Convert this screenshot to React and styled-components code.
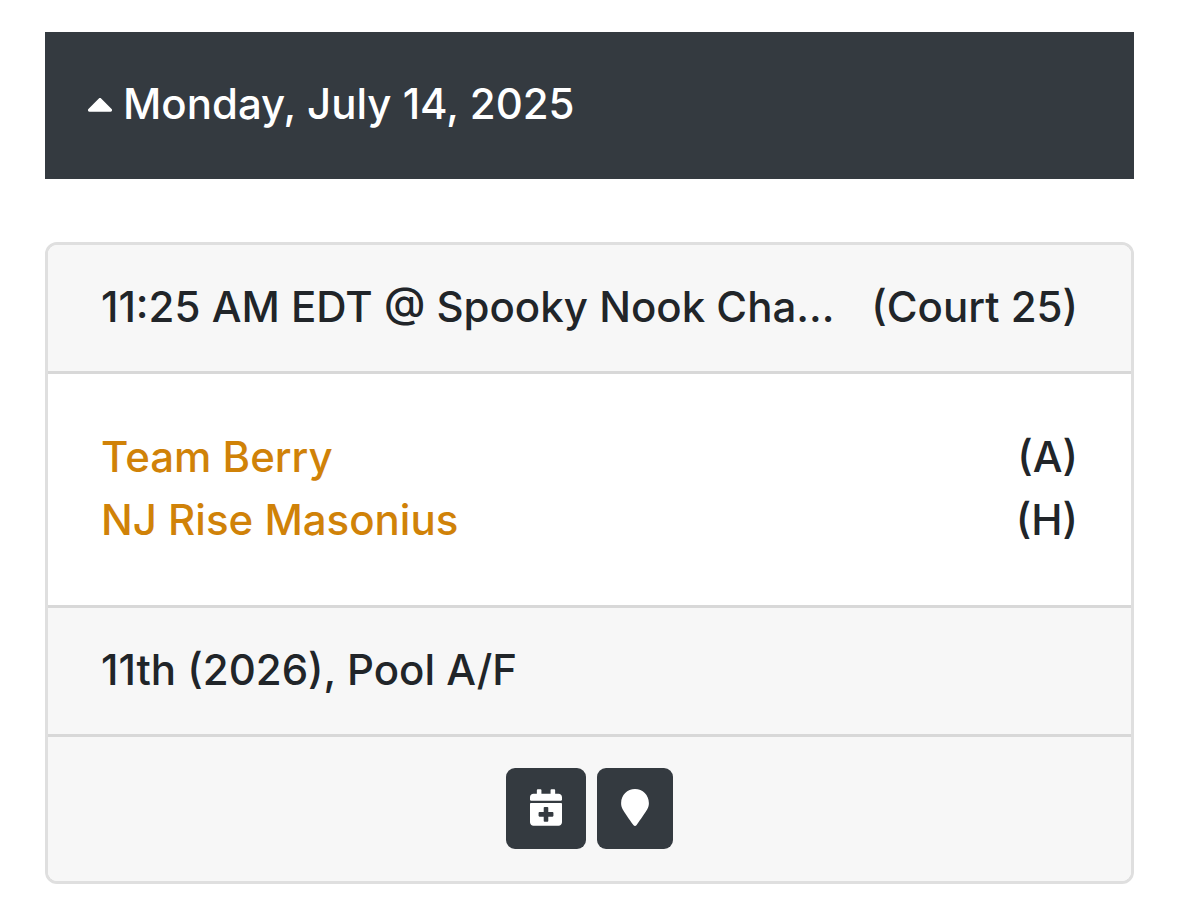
import React from 'react'
import styled, { createGlobalStyle } from 'styled-components'
import { FaCaretUp, FaCalendarPlus, FaMapMarker } from 'react-icons/fa'

const GlobalStyle = createGlobalStyle`
    *, *::before, *::after {
        box-sizing: border-box;
    }
    body {
        margin: 0;
        background-color: #ffffff;
        color: #212529;
        font-family: Inter, "Liberation Sans", sans-serif;
        font-size: 42px;
        font-weight: 500;
        line-height: 63px;
    }
`

const Container = styled.main`
    display: flex;
    flex-direction: column;
    gap: 63px;
    padding: 32px 45px 25px;
`

const DateToggle = styled.button`
    display: flex;
    align-items: center;
    gap: 10px;
    width: 100%;
    padding: 40px 42px 44px;
    border: none;
    background-color: #343a40;
    color: #ffffff;
    font: inherit;
    text-align: left;
    cursor: pointer;

    svg {
        width: 26px;
        height: 42px;
    }
`

const Card = styled.article`
    border: 3px solid #dfdfdf;
    border-radius: 12px;
    background-color: #ffffff;
    overflow: hidden;
`

const CardHeader = styled.header`
    display: flex;
    justify-content: space-between;
    gap: 24px;
    padding: 30px 53px 33px;
    border-bottom: 3px solid #d8d8d8;
    background-color: #f7f7f7;
    white-space: nowrap;
`

const Location = styled.span`
    min-width: 0;
    overflow: hidden;
    text-overflow: ellipsis;
`

const Teams = styled.ul`
    margin: 0;
    padding: 51px 53px 54px;
    list-style: none;
`

const Team = styled.li`
    display: flex;
    justify-content: space-between;
`

const TeamLink = styled.a`
    color: #d08208;
    text-decoration: none;
`

const CardFooter = styled.div`
    padding: 30px 53px 33px;
    border-top: 3px solid #d8d8d8;
    background-color: #f7f7f7;
`

const Actions = styled.div`
    display: flex;
    justify-content: center;
    gap: 11px;
    padding: 31px 53px 32px;
    border-top: 3px solid #d8d8d8;
    background-color: #f7f7f7;
`

const ActionButton = styled.button`
    display: flex;
    align-items: center;
    height: 81px;
    padding: 0 24px 3px;
    border: none;
    border-radius: 9px;
    background-color: #343a40;
    color: #ffffff;
    cursor: pointer;

    svg {
        width: ${props=>props.$iconWidth}px;
        height: 37px;
    }
`

const teams = [
    { name: 'Team Berry', side: '(A)' },
    { name: 'NJ Rise Masonius', side: '(H)' },
]

const App = () => {
  return (
    <>
        <GlobalStyle/>
        <Container>
            <DateToggle type="button" aria-expanded="true">
                <FaCaretUp/>
                Monday, July 14, 2025
            </DateToggle>
            <Card>
                <CardHeader>
                    <Location>11:25 AM EDT @ Spooky Nook Cha...</Location>
                    <span>(Court 25)</span>
                </CardHeader>
                <Teams>
                    {teams.map((team) => (
                        <Team key={team.name}>
                            <TeamLink href="#">{team.name}</TeamLink>
                            <span>{team.side}</span>
                        </Team>
                    ))}
                </Teams>
                <CardFooter>11th (2026), Pool A/F</CardFooter>
                <Actions>
                    <ActionButton type="button" aria-label="Add to calendar" $iconWidth={32}>
                        <FaCalendarPlus/>
                    </ActionButton>
                    <ActionButton type="button" aria-label="Show on map" $iconWidth={28}>
                        <FaMapMarker/>
                    </ActionButton>
                </Actions>
            </Card>
        </Container>
    </>
  )
}

export default App
